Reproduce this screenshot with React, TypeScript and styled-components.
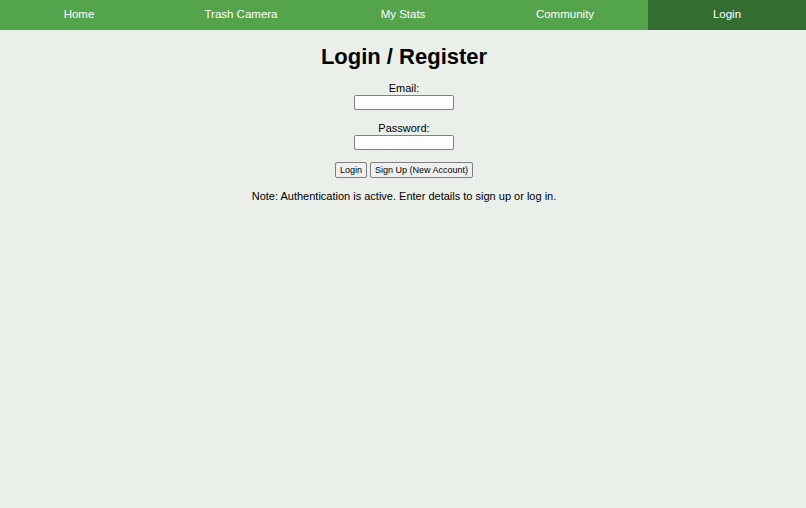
import styled, { createGlobalStyle } from "styled-components";

const GlobalStyle = createGlobalStyle`
  body {
    margin: 0;
    background: #ebefe9;
    font-family: "Liberation Sans", Arial, sans-serif;
  }
`;

const items = ["Home", "Trash Camera", "My Stats", "Community", "Login"];

function App() {
  return (
    <>
      <GlobalStyle />
      <StyledNav>
        {items.map((item) => (
          <NavItem key={item} $active={item === "Login"}>
            {item}
          </NavItem>
        ))}
      </StyledNav>

      <StyledMain>
        <Title>Login / Register</Title>
        <Field>
          <Label>Email:</Label>
          <Input type="email" />
        </Field>
        <Field>
          <Label>Password:</Label>
          <Input type="password" />
        </Field>
        <Buttons>
          <Button>Login</Button>
          <Button>Sign Up (New Account)</Button>
        </Buttons>
        <Note>Note: Authentication is active. Enter details to sign up or log in.</Note>
      </StyledMain>
    </>
  );
}

const StyledNav = styled.nav`
  display: flex;
  gap: 4px;
  height: 30px;
  background: #54a44c;
`;

const NavItem = styled.a<{ $active?: boolean }>`
  flex: 1;
  display: flex;
  align-items: center;
  justify-content: center;
  padding-bottom: 2px;
  color: white;
  font-size: 11.5px;
  background: ${(p) => (p.$active ? "#336e30" : "transparent")};
`;

const StyledMain = styled.main`
  display: flex;
  flex-direction: column;
  align-items: center;
  padding: 14px 0 0 2px;
`;

const Title = styled.h1`
  margin: 0 0 12px;
  font-size: 22px;
  font-weight: bold;
  color: #000;
`;

const Field = styled.div`
  display: flex;
  flex-direction: column;
  align-items: center;
  margin-bottom: 12px;
`;

const Label = styled.label`
  font-size: 11px;
  line-height: 13px;
  color: #000;
`;

const Input = styled.input`
  box-sizing: border-box;
  width: 100px;
  height: 15px;
  border: 1px solid #808080;
  border-radius: 2px;
  background: white;
  padding: 0;
`;

const Buttons = styled.div`
  display: flex;
  gap: 3px;
`;

const Button = styled.button`
  box-sizing: border-box;
  height: 16px;
  padding: 0 4px;
  font-family: "Liberation Sans", Arial, sans-serif;
  font-size: 9px;
  color: #000;
  background: #efefef;
  border: 1px solid #808080;
  border-radius: 2px;
`;

const Note = styled.p`
  margin: 12px 0 0;
  font-size: 11px;
  color: #000;
`;

export default App;
